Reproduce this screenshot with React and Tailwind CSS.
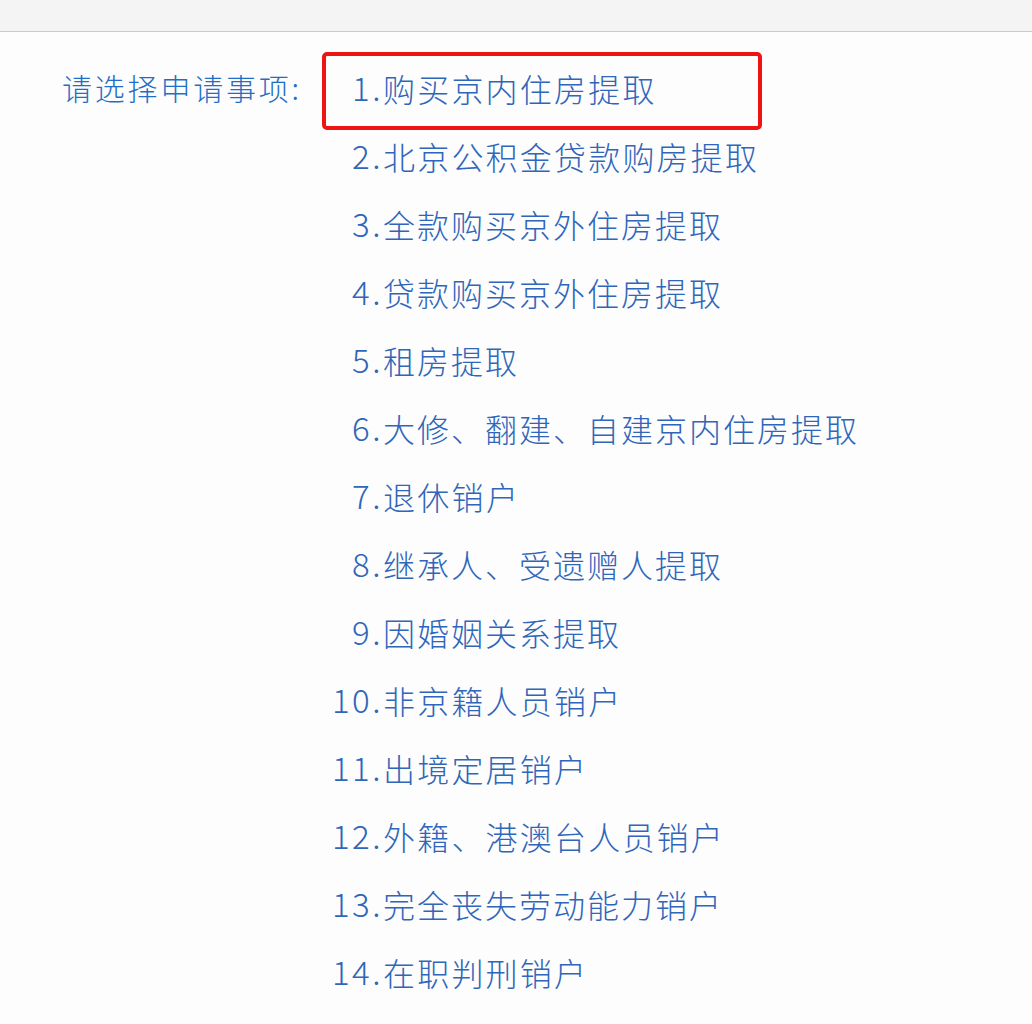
import React from "react";

const items = [
  ["1.", "购买京内住房提取", "tracking-[2.2px]"],
  ["2.", "北京公积金贷款购房提取", "tracking-[2.2px]"],
  ["3.", "全款购买京外住房提取", "tracking-[2px]"],
  ["4.", "贷款购买京外住房提取", "tracking-[2px]"],
  ["5.", "租房提取", "tracking-[2px]"],
  ["6.", "大修、翻建、自建京内住房提取", "tracking-[2px]"],
  ["7.", "退休销户", "tracking-[2.3px]"],
  ["8.", "继承人、受遗赠人提取", "tracking-[2px]"],
  ["9.", "因婚姻关系提取", "tracking-[2px]"],
  ["10.", "非京籍人员销户", "tracking-[2.2px]"],
  ["11.", "出境定居销户", "tracking-[2.2px]"],
  ["12.", "外籍、港澳台人员销户", "tracking-[2.2px]"],
  ["13.", "完全丧失劳动能力销户", "tracking-[2px]"],
  ["14.", "在职判刑销户", "tracking-[2.2px]"],
];

export default function App() {
  return (
    <div
      className="w-[1032px] h-[1024px] bg-[#fdfdfd] overflow-hidden"
      style={{ fontFamily: '"Noto Sans CJK SC", "Noto Sans", sans-serif' }}
    >
      <div className="h-[32px] bg-[#f4f4f5] border-b border-[#c9c9cc]" />
      <div className="flex pt-[22px]">
        <div className="pl-[62px] w-[322px] text-[30px] leading-[66px] text-[#1f6fc6] font-light tracking-[2.8px]">
          请选择申请事项:
        </div>
        <div className="flex flex-col">
          {items.map(([n, t, tr], i) => (
            <div key={i} className="relative flex h-[68px] items-center text-[32px] text-[#2f66ba] font-light">
              <span className="w-[61px] text-right text-[33px] tracking-[2.5px]">{n}</span>
              <span className={tr}>{t}</span>
              {i === 0 && (
                <div className="absolute left-0 top-[-2px] w-[440px] h-[78px] border-[4px] border-[#ee1414] rounded-[5px]" />
              )}
            </div>
          ))}
        </div>
      </div>
    </div>
  );
}
